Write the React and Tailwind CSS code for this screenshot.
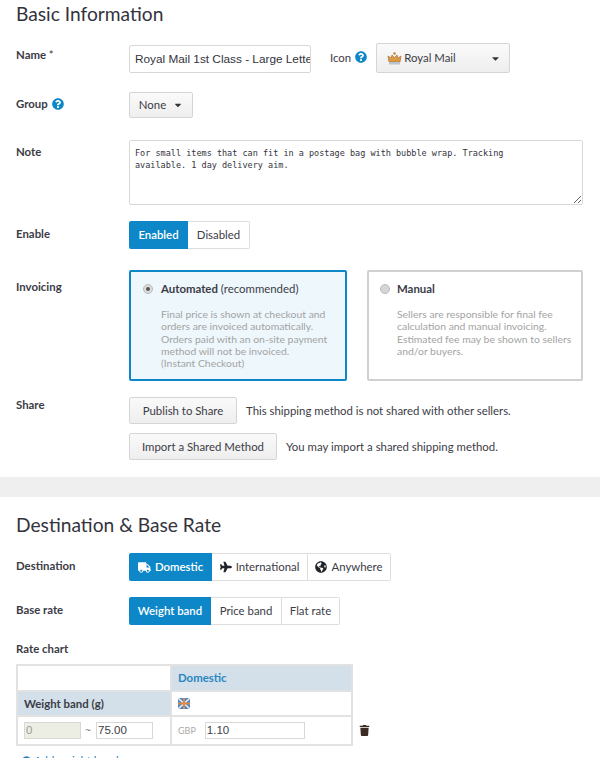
import { FaTruck, FaPlane, FaGlobeAmericas, FaTrash, FaQuestionCircle, FaCaretDown, FaPlusCircle } from "react-icons/fa";

const Help = () => <FaQuestionCircle className="text-[12px] text-[#0d87c7]" />;

const Crown = () => (
  <svg width="15" height="14" viewBox="0 0 15 14">
    <path d="M1 5l3 2 1-3 2.500 2.500L10 4l1 3 3-2-1 6H2z" fill="#d99a45" stroke="#a8662a" strokeWidth="0.6" />
    <circle cx="7.500" cy="2.500" r="1.300" fill="#c9852f" />
    <rect x="2" y="11" width="11" height="2.500" fill="#b9c4d0" />
  </svg>
);

const Flag = () => (
  <svg className="block" width="12" height="11" viewBox="0 0 12 11">
    <rect width="12" height="11" fill="#4f86c6" />
    <path d="M0 0l12 11M12 0L0 11" stroke="#e8eef5" strokeWidth="1.500" />
    <path d="M6 0v11M0 5.500h12" stroke="#d98a4a" strokeWidth="2" />
  </svg>
);

const Row = ({ label, labelClass, className, children }) => (
  <div className={"flex " + className}>
    <div className={"w-[113px] shrink-0 font-bold text-[11.4px] text-[#3c3c46] " + (labelClass || "")}>{label}</div>
    {children}
  </div>
);

const grayBtn = "h-[27px] flex items-center justify-center border border-[#d5d5d5] rounded-[2px] bg-gradient-to-b from-[#fafafa] to-[#eeeeee] text-[11.4px] text-[#3c3c46]";

const Segment = ({ items, widths }) => (
  <div className="flex h-[28px] text-[11.4px]">
    {items.map((item, i) => (
      <div
        key={item.label}
        className={
          (widths[i] || "") + " flex items-center justify-center gap-1 " +
          (i === 0
            ? "bg-[#0d87c7] text-white font-semibold rounded-l-[2px]"
            : "bg-white text-[#3c3c46] border border-[#dedede] border-l-0 last:rounded-r-[2px]")
        }
      >
        {item.icon}
        {item.label}
      </div>
    ))}
  </div>
);

export default function App() {
  return (
    <div className="h-[758px] overflow-hidden bg-white font-['Lato',sans-serif] text-[#3c3c46]">
      <div className="px-4 pt-[3px]">
        <h2 className="text-[19.2px] leading-[22px] text-[#33333d]">Basic Information</h2>

        <Row label={<span>Name <span className="font-normal">*</span></span>} labelClass="pt-[2px]" className="mt-[19px] h-[29px]">
          <input
            readOnly
            value="Royal Mail 1st Class - Large Letter"
            className="mt-[1px] w-[182px] h-[28px] border border-[#d8d8d8] rounded-[2px] pl-[5px] pr-0 text-[11.8px] font-['Liberation_Sans',sans-serif] text-[#33333d]"
          />
          <div className="ml-[19px] mt-[5px] flex items-start gap-1 text-[11.4px]">
            Icon <span className="mt-[2px]"><Help /></span>
          </div>
          <div className={grayBtn + " !h-[30px] -mt-[1px] ml-[9px] w-[134px] !justify-start pl-[10px] gap-[2px]"}>
            <Crown />
            Royal Mail
            <FaCaretDown className="ml-auto mr-[8px] text-[11px] text-[#33333d]" />
          </div>
        </Row>

        <Row
          label={<span className="flex items-center gap-1">Group <Help /></span>}
          labelClass="pt-[3px]"
          className="mt-[19px] h-[26px]"
        >
          <div className={grayBtn + " w-[64px] !h-[26px] gap-[7px]"}>
            None <FaCaretDown className="text-[10px] text-[#33333d]" />
          </div>
        </Row>

        <Row label="Note" labelClass="pt-[3px]" className="mt-[22px] h-[65px]">
          <textarea
            readOnly
            value={"For small items that can fit in a postage bag with bubble wrap. Tracking\navailable. 1 day delivery aim."}
            className="w-[454px] h-[65px] border border-[#d8d8d8] rounded-[2px] px-[5px] pt-[6px] text-[8.5px] leading-[12px] font-['DejaVu_Sans_Mono',monospace] text-[#33333d]"
          />
        </Row>

        <Row label="Enable" labelClass="pb-[2px]" className="mt-[16px] h-[27px] items-center">
          <Segment
            items={[{ label: "Enabled" }, { label: "Disabled" }]}
            widths={["w-[59px]", "w-[62px]"]}
          />
        </Row>

        <Row label="Invoicing" labelClass="pt-[8px]" className="mt-[22px] h-[111px]">
          <div className="w-[218px] h-[111px] border-2 border-[#0d87c7] rounded-[2px] bg-[#eef7fc] pl-[12px] pt-[8px]">
            <div className="flex items-center gap-[8px] text-[11.4px]">
              <span className="w-[10px] h-[10px] rounded-full bg-[#dcdcdc] border border-[#bbb] flex items-center justify-center">
                <span className="w-[4px] h-[4px] rounded-full bg-[#555]" />
              </span>
              <span><b>Automated</b> (recommended)</span>
            </div>
            <p className="ml-[18px] mt-[11px] text-[10.400px] leading-[12.200px] text-[#a3a3a3]">
              Final price is shown at checkout and orders are invoiced automatically. Orders paid with an on-site payment method will not be invoiced.<br />(Instant Checkout)
            </p>
          </div>
          <div className="ml-[20px] w-[216px] h-[111px] border-2 border-[#d0d0d0] rounded-[2px] pl-[11px] pt-[8px]">
            <div className="flex items-center gap-[7px] text-[11.4px]">
              <span className="w-[10px] h-[10px] rounded-full bg-[#d6d6d6] border border-[#bbb]" />
              <b>Manual</b>
            </div>
            <p className="ml-[17px] mt-[11px] text-[10.400px] leading-[12.200px] text-[#a3a3a3]">
              Sellers are responsible for final fee calculation and manual invoicing. Estimated fee may be shown to sellers and/or buyers.
            </p>
          </div>
        </Row>

        <Row label="Share" labelClass="-mt-[1px]" className="mt-[16px]">
          <div className="flex flex-col gap-[9px]">
            <div className="flex items-center gap-[9px]">
              <div className={grayBtn + " w-[108px]"}>Publish to Share</div>
              <span className="text-[11.4px]">This shipping method is not shared with other sellers.</span>
            </div>
            <div className="flex items-center gap-[9px]">
              <div className={grayBtn + " w-[148px]"}>Import a Shared Method</div>
              <span className="text-[11.4px]">You may import a shared shipping method.</span>
            </div>
          </div>
        </Row>
      </div>

      <div className="mt-[17px] h-[20px] bg-[#efefef]" />

      <div className="px-4 pt-[17px]">
        <h2 className="text-[19.2px] leading-[22px] text-[#33333d]">Destination &amp; Base Rate</h2>

        <Row label="Destination" labelClass="pb-[2px]" className="mt-[17px] h-[28px] items-center">
          <Segment
            items={[
              { label: "Domestic", icon: <FaTruck className="text-[13px]" /> },
              { label: "International", icon: <FaPlane className="text-[12px] text-[#22222a]" /> },
              { label: "Anywhere", icon: <FaGlobeAmericas className="text-[12px] text-[#22222a]" /> },
            ]}
            widths={["w-[83px]", "w-[96px]", "w-[83px]"]}
          />
        </Row>

        <Row label="Base rate" labelClass="pb-[2px]" className="mt-[16px] h-[28px] items-center">
          <Segment
            items={[{ label: "Weight band" }, { label: "Price band" }, { label: "Flat rate" }]}
            widths={["w-[82px]", "w-[71px]", "w-[58px]"]}
          />
        </Row>

        <div className="mt-[16px] font-bold text-[11.4px] leading-[15px]">Rate chart</div>

        <div className="mt-[8px] flex items-center">
          <table className="w-[337px] h-[82px] border-collapse border-2 border-[#e2e2e2] text-[11.4px]">
            <tbody>
              <tr className="h-[26px]">
                <td className="w-[154px] border-r-2 border-[#e2e2e2]" />
                <td className="bg-[#d3e0e9] font-bold text-[#2a86c2] pl-[6px]">Domestic</td>
              </tr>
              <tr className="h-[25px] border-t-2 border-[#e2e2e2]">
                <td className="bg-[#d3e0e9] font-bold pl-[6px] border-r-2 border-[#e2e2e2]">Weight band (g)</td>
                <td className="pl-[6px]"><Flag /></td>
              </tr>
              <tr className="border-t-2 border-[#e2e2e2]">
                <td className="pl-[6px] border-r-2 border-[#e2e2e2]">
                  <div className="flex items-center gap-[4px] font-['Liberation_Sans',sans-serif] text-[11.5px]">
                    <div className="w-[57px] h-[17px] bg-[#eceee4] border border-[#d8d8d8] text-[#999] pl-[1px] leading-[15px]">0</div>
                    <span className="w-[7px] text-[10px] text-[#777]">~</span>
                    <div className="w-[57px] h-[17px] border border-[#d8d8d8] pl-[1px] leading-[15px]">75.00</div>
                  </div>
                </td>
                <td className="pl-[6px]">
                  <div className="flex items-center gap-[9px]">
                    <span className="text-[9px] text-[#aaa]">GBP</span>
                    <div className="w-[100px] h-[17px] border border-[#d8d8d8] pl-[1px] leading-[15px] font-['Liberation_Sans',sans-serif] text-[11.5px]">1.10</div>
                  </div>
                </td>
              </tr>
            </tbody>
          </table>
          <FaTrash className="ml-[6px] mt-[50px] text-[11px] text-[#3a2a22]" />
        </div>

        <div className="mt-[6px] pl-[6px] flex items-center gap-[3px] text-[11.4px] text-[#2a86c2]">
          <FaPlusCircle className="text-[9px]" />
          Add weight band
        </div>
      </div>
    </div>
  );
}
